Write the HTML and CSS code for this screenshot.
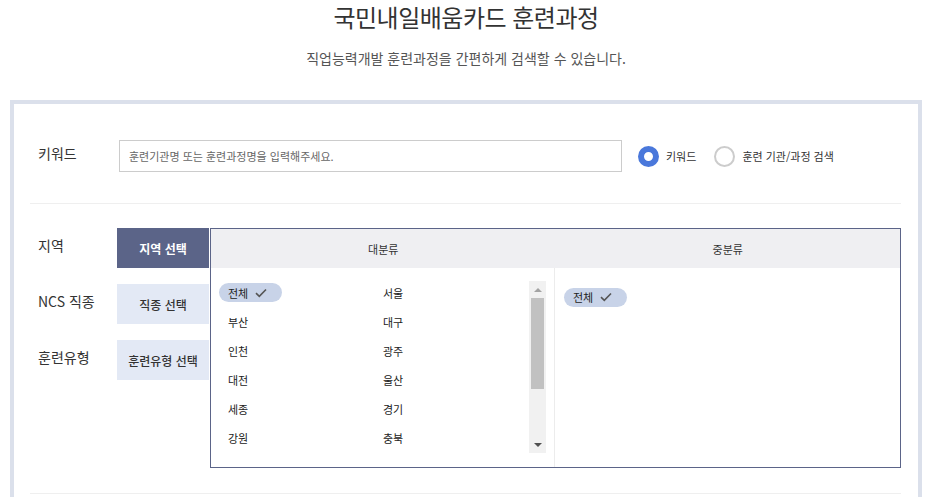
FILE: index.html
```html
<!DOCTYPE html>
<html lang="ko">
<head>
    <meta charset="UTF-8">
    <title>국민내일배움카드 훈련과정</title>
    <link rel="stylesheet" href="styles.css">
</head>
<body>
    <div class="page-head">
        <h1>국민내일배움카드 훈련과정</h1>
        <p class="sub">직업능력개발 훈련과정을 간편하게 검색할 수 있습니다.</p>
    </div>

    <div class="search-box">
        <div class="row-keyword">
            <div class="label">키워드</div>
            <input type="text" class="kw-input" placeholder="훈련기관명 또는 훈련과정명을 입력해주세요.">
            <label class="radio"><span class="dot on"></span>키워드</label>
            <label class="radio"><span class="dot"></span>훈련 기관/과정 검색</label>
        </div>

        <div class="row-filter">
            <div class="side">
                <div class="side-item">
                    <div class="label">지역</div>
                    <button class="sel-btn active">지역 선택</button>
                </div>
                <div class="side-item">
                    <div class="label">NCS 직종</div>
                    <button class="sel-btn">직종 선택</button>
                </div>
                <div class="side-item">
                    <div class="label">훈련유형</div>
                    <button class="sel-btn">훈련유형 선택</button>
                </div>
            </div>

            <div class="panel">
                <div class="panel-head">
                    <div>대분류</div>
                    <div>중분류</div>
                </div>
                <div class="panel-body">
                    <div class="col-left">
                        <div class="list-wrap">
                            <ul class="list">
                                <li><span class="chip">전체 <svg width="12" height="10" viewBox="0 0 12 10"><path d="M1 5.2 4.3 8.3 11 1.5" fill="none" stroke="#555" stroke-width="1.6"/></svg></span></li>
                                <li>서울</li>
                                <li>부산</li>
                                <li>대구</li>
                                <li>인천</li>
                                <li>광주</li>
                                <li>대전</li>
                                <li>울산</li>
                                <li>세종</li>
                                <li>경기</li>
                                <li>강원</li>
                                <li>충북</li>
                            </ul>
                            <div class="fake-scroll">
                                <div class="arrow up"></div>
                                <div class="thumb-area"><div class="thumb"></div></div>
                                <div class="arrow down"></div>
                            </div>
                        </div>
                    </div>
                    <div class="col-right">
                        <span class="chip">전체 <svg width="12" height="10" viewBox="0 0 12 10"><path d="M1 5.2 4.3 8.3 11 1.5" fill="none" stroke="#555" stroke-width="1.6"/></svg></span>
                    </div>
                </div>
            </div>
        </div>
        <div class="row-more"></div>
    </div>
</body>
</html>
```

FILE: styles.css
```css
body { margin: 0; font-family: "Noto Sans CJK KR", "Noto Sans", sans-serif; color: #333; background: #fff; }

.page-head { text-align: center; padding-left: 5px; }
.page-head h1 { margin: 0; font-size: 24px; line-height: 34px; font-weight: 400; letter-spacing: -0.5px; color: #333; }
.page-head .sub { margin: 14px 0 0; font-size: 14px; line-height: 20px; color: #555; }

.search-box {
    margin: 32px 0 0 10px;
    width: 912px;
    box-sizing: border-box;
    border: 4px solid #dbe0eb;
    padding: 0 17px 0 16px;
    height: 600px;
}
.label { font-size: 14px; color: #333; }

.row-keyword { display: flex; align-items: center; padding: 36px 0 31px 8px; border-bottom: 1px solid #efefef; }
.row-keyword .label { width: 81px; margin-top: -6px; }
.kw-input {
    width: 503px; height: 32px; box-sizing: border-box;
    border: 1px solid #ccc; padding: 0 9px;
    font-family: inherit; font-size: 11px; color: #333;
}
.kw-input::placeholder { color: #666; }
.radio { display: flex; align-items: center; font-size: 11px; color: #333; }
.radio:first-of-type { margin-left: 16px; }
.radio + .radio { margin-left: 18px; }
.dot { width: 21px; height: 21px; box-sizing: border-box; border-radius: 50%; border: 2px solid #ccc; margin-right: 7px; }
.dot.on { border: 6.5px solid #4a78db; }

.row-filter { display: flex; padding: 24px 0 25px; border-bottom: 1px solid #efefef; }
.side { display: flex; flex-direction: column; gap: 16px; }
.side-item { display: flex; align-items: center; }
.side-item .label { width: 79px; padding-left: 8px; margin-bottom: 6px; }
.sel-btn {
    width: 92px; height: 40px; border: none; padding: 0;
    background: #e3e9f5; color: #333; font-family: inherit; font-size: 12px; font-weight: 500;
}
.sel-btn.active { background: #5b6488; color: #fff; font-weight: 700; }

.panel { margin-left: 1px; width: 691px; height: 240px; box-sizing: border-box; border: 1px solid #5b6488; display: flex; flex-direction: column; }
.panel-head { display: flex; height: 39px; background: #efeff2; font-size: 11px; color: #333; }
.panel-head div { flex: 1; display: flex; align-items: center; justify-content: center; }
.panel-body { flex: 1; display: flex; }
.col-left { width: 344px; border-right: 1px solid #ececec; padding: 13px 8px 14px 8px; box-sizing: border-box; }
.col-right { flex: 1; padding: 15px 8px 15px 9px; }

.list-wrap { display: flex; height: 172px; }
.list { flex: 1; margin: 0; padding: 2px 0 0; list-style: none; display: grid; grid-template-columns: 155px 1fr; grid-auto-rows: 19px; row-gap: 10px; overflow: hidden; font-size: 11px; color: #222; }
.list li { display: flex; align-items: center; padding-left: 9px; }
.list li:first-child { padding-left: 0; }

.chip { display: inline-flex; align-items: center; gap: 7px; height: 19px; padding: 0 15px 0 9px; border-radius: 10px; background: #c8d3e8; font-size: 11px; color: #222; }

.fake-scroll { width: 17px; background: #f1f1f1; display: flex; flex-direction: column; }
.fake-scroll .arrow { height: 17px; display: flex; align-items: center; justify-content: center; }
.fake-scroll .arrow::before { content: ""; border-left: 4px solid transparent; border-right: 4px solid transparent; }
.fake-scroll .up::before { border-bottom: 4px solid #a3a3a3; }
.fake-scroll .down::before { border-top: 4px solid #505050; }
.thumb-area { flex: 1; padding: 0 2px; }
.thumb { height: 91px; background: #c1c1c1; }

.row-more { height: 40px; }
```
